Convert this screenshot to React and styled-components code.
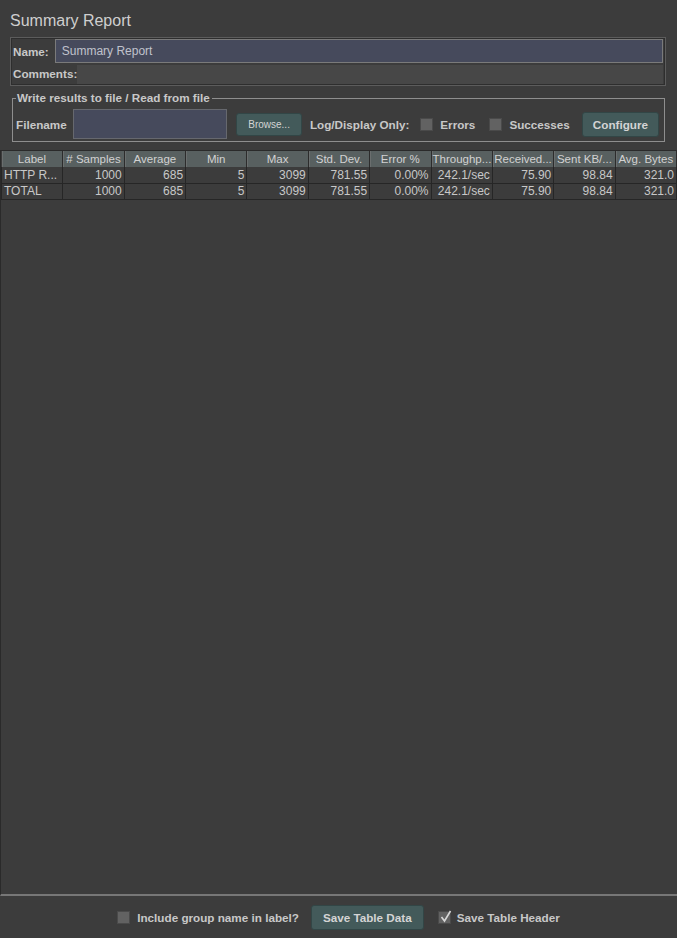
import React from "react";
import styled, { createGlobalStyle } from "styled-components";

const GlobalStyle = createGlobalStyle`
  html, body {
    margin: 0;
    padding: 0;
    background: #3c3c3c;
  }
  * {
    box-sizing: border-box;
  }
`;

const Page = styled.div`
  width: 677px;
  height: 938px;
  display: flex;
  flex-direction: column;
  background: #3c3c3c;
  color: #c6c6c6;
  font-family: "Liberation Sans", Arial, sans-serif;
  font-size: 12px;
`;

const Title = styled.div`
  font-size: 16px;
  padding: 12px 0 0 10px;
  height: 37px;
  color: #cfcfcf;
`;

const NamePanel = styled.div`
  margin: 0 11px 0 10px;
  border: 1px solid #5c5c5c;
  box-shadow: inset 0 0 0 1px #2e2e2e;
  display: flex;
  flex-direction: column;
  padding: 1px 2px 1px 1px;
`;

const Row = styled.div`
  display: flex;
  align-items: center;
  height: ${(p) => p.$h}px;
`;

const BoldLabel = styled.span`
  font-weight: bold;
  font-size: 11.7px;
  white-space: nowrap;
  padding: 0 ${(p) => p.$pr ?? 6}px 0 ${(p) => p.$pl ?? 1}px;
  color: #c8c8c8;
`;

const NameField = styled.div`
  flex: 1;
  height: 24px;
  border: 1px solid #7a7a7a;
  background: #464a5c;
  padding: 0 6px;
  display: flex;
  align-items: center;
  color: #c0c2cc;
`;

const CommentArea = styled.div`
  flex: 1;
  height: 19px;
  background: #474747;
  margin-top: 1px;
`;

const Fieldset = styled.fieldset`
  margin: 5px 12px 0 12px;
  padding: 4px 5px 2px 2px;
  min-width: 0;
  border: 1px solid #8e8e8e;
  display: flex;
  align-items: center;
`;

const Legend = styled.legend`
  font-weight: bold;
  font-size: 11.7px;
  padding: 0 2px 0 1px;
  margin-left: 1px;
  line-height: 14px;
  color: #c8c8c8;
`;

const FileField = styled.div`
  width: 156px;
  height: 30px;
  margin: 0 9px 0 0;
  border: 1px solid #66686e;
  background: #464a5c;
`;

const Button = styled.div`
  height: ${(p) => p.$h || 24}px;
  padding: 0 ${(p) => p.$px || 12}px;
  display: flex;
  align-items: center;
  justify-content: center;
  border-radius: 3px;
  border: 1px solid #324646;
  background: #435a5a;
  color: #d4d4d4;
  font-weight: ${(p) => (p.$small ? "normal" : "bold")};
  font-size: ${(p) => (p.$small ? 10 : 11.7)}px;
  white-space: nowrap;
  margin-right: ${(p) => p.$mr || 0}px;
`;

const CheckBox = styled.span`
  width: 13px;
  height: 13px;
  flex: none;
  border: 1px solid #4a4a4a;
  background: #626262;
  margin: 0 ${(p) => p.$mr ?? 7}px 0 0;
  position: relative;
`;

const CheckLabel = styled.span`
  font-weight: bold;
  font-size: 11.7px;
  white-space: nowrap;
  margin-right: ${(p) => p.$mr || 0}px;
  color: #c8c8c8;
`;

const ScrollPane = styled.div`
  margin-top: 8px;
  flex: 1;
  border-left: 1px solid #2a2a2a;
  border-top: 1px solid #2a2a2a;
  border-bottom: 2px solid #777777;
  background: #3c3c3c;
`;

const Table = styled.table`
  width: 676px;
  table-layout: fixed;
  border-collapse: collapse;
`;

const Th = styled.th`
  height: 16px;
  padding: 0 1px;
  font-weight: normal;
  font-size: 11.5px;
  color: #d2d2d2;
  text-align: center;
  white-space: nowrap;
  overflow: hidden;
  background: #586060;
  border-right: 1px solid #2c2c2c;
  box-shadow: inset 1px 0 0 #6a6e6e;
`;

const Td = styled.td`
  height: 16px;
  padding: 0 2px;
  text-align: ${(p) => (p.$left ? "left" : "right")};
  white-space: nowrap;
  overflow: hidden;
  border: 1px solid #262626;
  border-top: none;
  color: #c8c8c8;
  font-size: 12px;
  line-height: 14px;
`;

const Footer = styled.div`
  height: 42px;
  display: flex;
  align-items: center;
  justify-content: center;
`;

const Tick = () => (
  <svg
    width="13"
    height="13"
    viewBox="0 0 13 13"
    style={{ position: "absolute", left: 0, top: -2 }}
  >
    <path d="M2.5 7 L5.5 11 L11.5 1" fill="none" stroke="#d8d8d8" strokeWidth="1.6" />
  </svg>
);

const headers = [
  "Label",
  "# Samples",
  "Average",
  "Min",
  "Max",
  "Std. Dev.",
  "Error %",
  "Throughp...",
  "Received...",
  "Sent KB/...",
  "Avg. Bytes",
];

const rows = [
  ["HTTP R...", "1000", "685", "5", "3099", "781.55", "0.00%", "242.1/sec", "75.90", "98.84", "321.0"],
  ["TOTAL", "1000", "685", "5", "3099", "781.55", "0.00%", "242.1/sec", "75.90", "98.84", "321.0"],
];

export default function App() {
  return (
    <Page>
      <GlobalStyle />
      <Title>Summary Report</Title>
      <NamePanel>
        <Row $h={24}>
          <BoldLabel $pr={6}>Name:</BoldLabel>
          <NameField>Summary Report</NameField>
        </Row>
        <Row $h={21}>
          <BoldLabel $pr={0}>Comments:</BoldLabel>
          <CommentArea />
        </Row>
      </NamePanel>
      <Fieldset>
        <Legend>Write results to file / Read from file</Legend>
        <BoldLabel $pr={6}>Filename</BoldLabel>
        <FileField />
        <Button $small $h={23} $px={11} $mr={8}>
          Browse...
        </Button>
        <CheckLabel $mr={11}>Log/Display Only:</CheckLabel>
        <CheckBox />
        <CheckLabel $mr={14}>Errors</CheckLabel>
        <CheckBox />
        <CheckLabel $mr={12}>Successes</CheckLabel>
        <Button $h={25} $px={10}>
          Configure
        </Button>
      </Fieldset>
      <ScrollPane>
        <Table>
          <thead>
            <tr>
              {headers.map((h) => (
                <Th key={h}>{h}</Th>
              ))}
            </tr>
          </thead>
          <tbody>
            {rows.map((r, i) => (
              <tr key={i}>
                {r.map((c, j) => (
                  <Td key={j} $left={j === 0}>
                    {c}
                  </Td>
                ))}
              </tr>
            ))}
          </tbody>
        </Table>
      </ScrollPane>
      <Footer>
        <CheckBox />
        <CheckLabel $mr={12}>Include group name in label?</CheckLabel>
        <Button $h={25} $px={11} $mr={14}>
          Save Table Data
        </Button>
        <CheckBox $mr={6}>
          <Tick />
        </CheckBox>
        <CheckLabel>Save Table Header</CheckLabel>
      </Footer>
    </Page>
  );
}
